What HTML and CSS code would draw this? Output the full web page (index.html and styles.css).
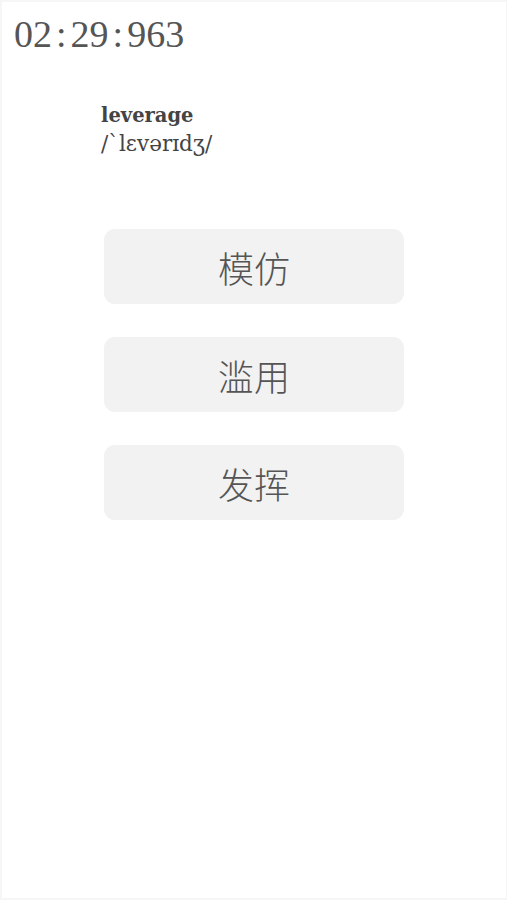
FILE: index.html
```html
<!DOCTYPE html>
<html lang="zh">
<head>
<meta charset="utf-8">
<link rel="stylesheet" href="styles.css">
</head>
<body>
<div class="frame">
  <div class="timer">02<span class="sep">:</span>29<span class="sep">:</span>963</div>
  <div class="word">
    <div class="term">leverage</div>
    <div class="phonetic">/`lɛvərɪdʒ/</div>
  </div>
  <div class="options">
    <div class="option">模仿</div>
    <div class="option">滥用</div>
    <div class="option">发挥</div>
  </div>
</div>
</body>
</html>
```
FILE: styles.css
```css
html, body {
  margin: 0;
  padding: 0;
  background: #fff;
}
.frame {
  box-sizing: border-box;
  width: 507px;
  height: 900px;
  border: 2px solid #f6f6f6;
  border-right-width: 1px;
  background: #fff;
  display: flex;
  flex-direction: column;
}
.timer {
  font-family: "Liberation Serif", "DejaVu Serif", serif;
  font-size: 38px;
  color: #555;
  line-height: 1;
  padding: 13px 0 0 12px;
}
.sep {
  margin: 0 4px;
}
.word {
  margin-top: 51px;
  padding-left: 99px;
  font-family: "DejaVu Serif", "Liberation Serif", serif;
  color: #444;
}
.term {
  font-size: 19.5px;
  font-weight: 600;
  line-height: 24px;
}
.phonetic {
  font-size: 21.5px;
  line-height: 32px;
}
.options {
  margin-top: 69px;
  padding-left: 102px;
  display: flex;
  flex-direction: column;
  gap: 33px;
}
.option {
  width: 300px;
  height: 75px;
  background: #f2f2f2;
  border-radius: 11px;
  display: flex;
  align-items: center;
  justify-content: center;
  font-family: "Noto Sans CJK SC", "Noto Sans", sans-serif;
  font-weight: 300;
  font-size: 36px;
  color: #555;
}
```
